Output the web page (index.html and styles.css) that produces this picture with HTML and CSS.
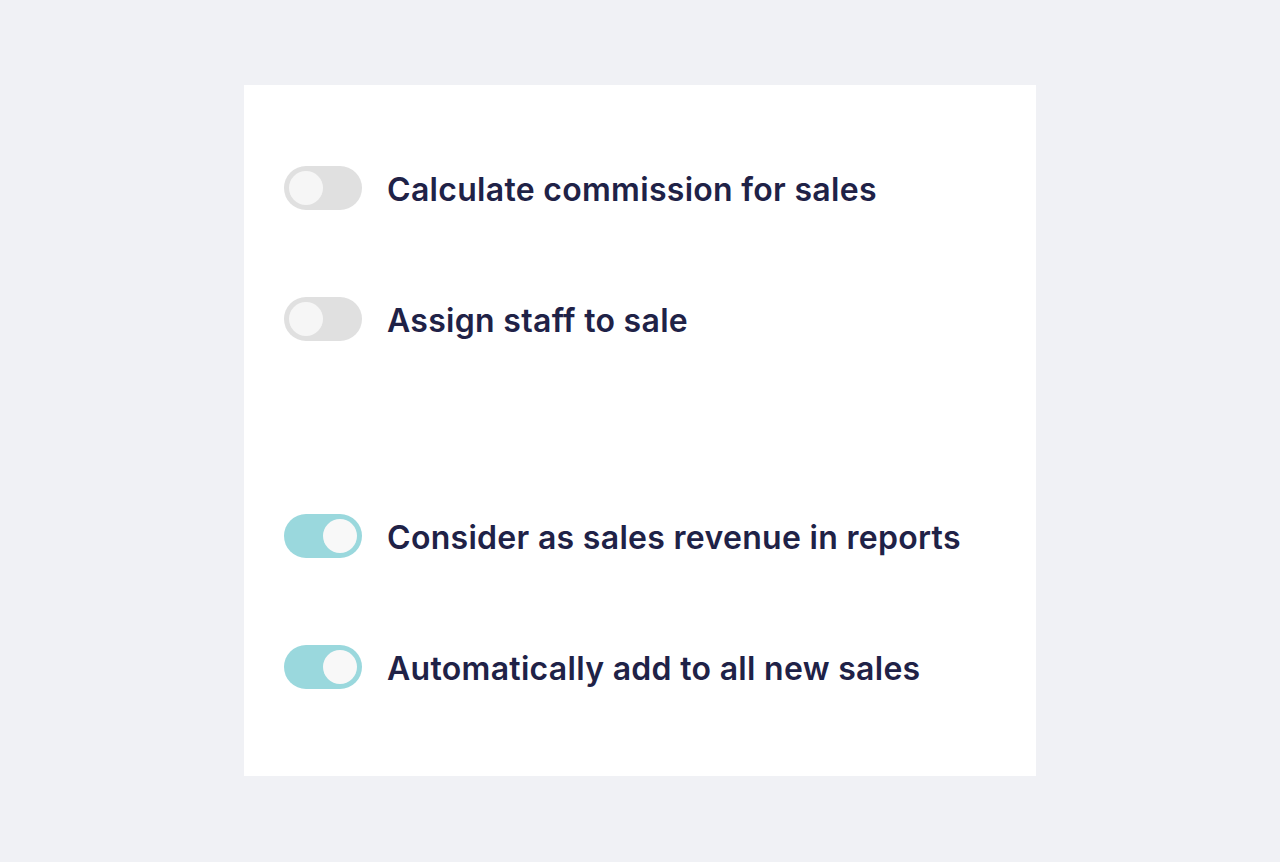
FILE: index.html
```html
<!DOCTYPE html>
<html lang="en">
<head>
<meta charset="utf-8">
<title>Sales settings</title>
<link rel="stylesheet" href="styles.css">
</head>
<body>
<main class="card">
  <section class="group">
    <label class="row"><span class="toggle"><span class="knob"></span></span><span class="label">Calculate commission for sales</span></label>
    <label class="row"><span class="toggle"><span class="knob"></span></span><span class="label">Assign staff to sale</span></label>
  </section>
  <section class="group">
    <label class="row"><span class="toggle on"><span class="knob"></span></span><span class="label">Consider as sales revenue in reports</span></label>
    <label class="row"><span class="toggle on"><span class="knob"></span></span><span class="label">Automatically add to all new sales</span></label>
  </section>
</main>
</body>
</html>
```

FILE: styles.css
```css
html, body {
  margin: 0;
  padding: 0;
  background: #f0f1f5;
  height: 100%;
}
body {
  padding-top: 85px;
  box-sizing: border-box;
  font-family: "Inter", "Open Sans", sans-serif;
}
.card {
  width: 792px;
  height: 691px;
  margin-left: 244px;
  background: #ffffff;
  box-sizing: border-box;
  padding: 81px 0 0 40px;
  display: flex;
  flex-direction: column;
  gap: 173px;
}
.group {
  display: flex;
  flex-direction: column;
  gap: 87px;
}
.row {
  display: flex;
  align-items: center;
  gap: 25px;
  height: 44px;
}
.toggle {
  width: 78px;
  height: 44px;
  border-radius: 22px;
  background: #e0e0e0;
  box-sizing: border-box;
  padding: 5px;
  display: flex;
  align-items: center;
  flex: none;
}
.knob {
  width: 34px;
  height: 34px;
  border-radius: 50%;
  background: #f6f6f6;
}
.toggle.on {
  background: #9ad8dd;
  justify-content: flex-end;
}
.toggle.on .knob {
  background: #f8f8f8;
}
.label {
  font-size: 32px;
  font-weight: 600;
  color: #1f2247;
  letter-spacing: 0.3px;
  padding-top: 3px;
}
```
